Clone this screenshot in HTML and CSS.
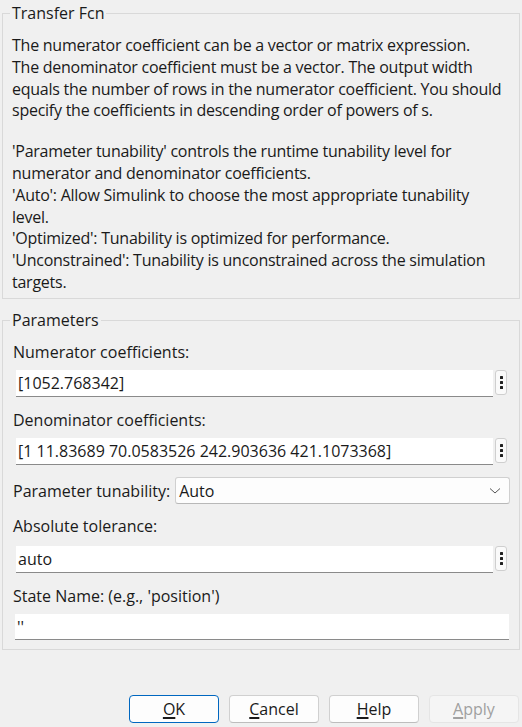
FILE: index.html
```html
<!DOCTYPE html>
<html>
<head>
<meta charset="utf-8">
<link rel="stylesheet" href="styles.css">
</head>
<body>
<div class="dialog">
  <fieldset class="group desc">
    <legend>Transfer Fcn</legend>
    <p class="text">The numerator coefficient can be a vector or matrix expression.<br>The denominator coefficient must be a vector. The output width<br>equals the number of rows in the numerator coefficient. You should<br>specify the coefficients in descending order of powers of s.</p>
    <p class="text second">'Parameter tunability' controls the runtime tunability level for<br>numerator and denominator coefficients.<br>'Auto': Allow Simulink to choose the most appropriate tunability<br>level.<br>'Optimized': Tunability is optimized for performance.<br>'Unconstrained': Tunability is unconstrained across the simulation<br>targets.</p>
  </fieldset>
  <fieldset class="group params">
    <legend>Parameters</legend>
    <div class="label">Numerator coefficients:</div>
    <div class="field-row">
      <div class="input">[1052.768342]</div>
      <div class="more"><span></span><span></span><span></span></div>
    </div>
    <div class="label">Denominator coefficients:</div>
    <div class="field-row before-select">
      <div class="input">[1 11.83689 70.0583526 242.903636 421.1073368]</div>
      <div class="more"><span></span><span></span><span></span></div>
    </div>
    <div class="select-row">
      <div class="select-label">Parameter tunability:</div>
      <div class="select">
        <span>Auto</span>
        <svg class="chev" width="12" height="8" viewBox="0 0 12 8"><path d="M1 1.5 L6 6 L11 1.5" fill="none" stroke="#555" stroke-width="1"/></svg>
      </div>
    </div>
    <div class="label loose">Absolute tolerance:</div>
    <div class="field-row after-tol">
      <div class="input">auto</div>
      <div class="more"><span></span><span></span><span></span></div>
    </div>
    <div class="label tight">State Name: (e.g., 'position')</div>
    <div class="field-row">
      <div class="input wide">''</div>
    </div>
  </fieldset>
  <div class="buttons">
    <div class="btn default"><u>O</u>K</div>
    <div class="btn"><u>C</u>ancel</div>
    <div class="btn"><u>H</u>elp</div>
    <div class="btn disabled"><u>A</u>pply</div>
  </div>
</div>
</body>
</html>
```
FILE: styles.css
```css
html, body {
  margin: 0;
  padding: 0;
  background: #f0f0f0;
}
body {
  width: 522px;
  height: 727px;
  overflow: hidden;
  font-family: "Open Sans", "Noto Sans", sans-serif;
  font-size: 16px;
  color: #1a1a1a;
}
.dialog {
  padding: 3px 2px 0 2px;
}
.group {
  margin: 0;
  border: 1px solid #d9d9d9;
  padding: 0 9px 0 10px;
  min-inline-size: 0;
}
.group legend {
  padding: 0 2px;
  margin-left: -3px;
  font-size: 16px;
  line-height: 20px;
  color: #1a1a1a;
}
.text {
  margin: 0;
  line-height: 21.8px;
  margin-left: -1px;
  white-space: nowrap;
  letter-spacing: -0.25px;
}
.desc {
  padding-top: 12px;
  height: 296px;
  box-sizing: border-box;
}
.text.second {
  margin-top: 19px;
}
.params {
  margin-top: 11px;
  height: 340px;
  box-sizing: border-box;
  padding-top: 12px;
}
.label {
  line-height: 20px;
  margin-bottom: 8px;
}
.label.loose {
  margin-bottom: 10px;
}
.label.tight {
  margin-bottom: 8px;
}
.field-row {
  display: flex;
  align-items: flex-start;
  gap: 2px;
  margin-bottom: 13px;
  margin-left: 3px;
}
.field-row.before-select {
  margin-bottom: 13px;
}
.field-row.after-tol {
  margin-bottom: 13px;
}
.input {
  width: 477px;
  height: 27px;
  box-sizing: border-box;
  background: #fff;
  border-bottom: 1px solid #8a8a8a;
  padding-left: 2px;
  line-height: 26px;
  white-space: nowrap;
  overflow: hidden;
}
.input.wide {
  width: 494px;
  height: 26px;
  margin-left: -1px;
}
.more {
  width: 12px;
  height: 25px;
  box-sizing: border-box;
  border: 1px solid #cfcfcf;
  border-radius: 3px;
  background: #fafafa;
  display: flex;
  flex-direction: column;
  align-items: center;
  justify-content: center;
  gap: 2px;
}
.more span {
  width: 3px;
  height: 3px;
  background: #202020;
  border-radius: 0.5px;
}
.select-row {
  display: flex;
  align-items: center;
  gap: 5px;
  margin-top: -1px;
  margin-bottom: 12px;
}
.select-label {
  line-height: 20px;
  white-space: nowrap;
}
.select {
  flex: 1;
  height: 27px;
  box-sizing: border-box;
  background: #fdfdfd;
  border: 1px solid #d0d0d0;
  border-bottom-color: #b8b8b8;
  border-radius: 3px;
  display: flex;
  align-items: center;
  justify-content: space-between;
  padding: 0 8px 0 3px;
}
.buttons {
  display: flex;
  justify-content: flex-end;
  gap: 10px;
  margin-top: 45px;
  padding-right: 1px;
}
.btn {
  width: 90px;
  height: 28px;
  box-sizing: border-box;
  border: 1px solid #d0d0d0;
  border-bottom-color: #bdbdbd;
  border-radius: 4px;
  background: #fdfdfd;
  line-height: 26px;
  text-align: center;
  color: #1a1a1a;
}
.btn.default {
  border-color: #0067c0;
}
.btn.disabled {
  background: #f5f5f5;
  border-color: #e5e5e5;
  color: #a0a0a0;
}
.btn u {
  text-decoration-thickness: 2px;
  text-underline-offset: 2px;
}
```
